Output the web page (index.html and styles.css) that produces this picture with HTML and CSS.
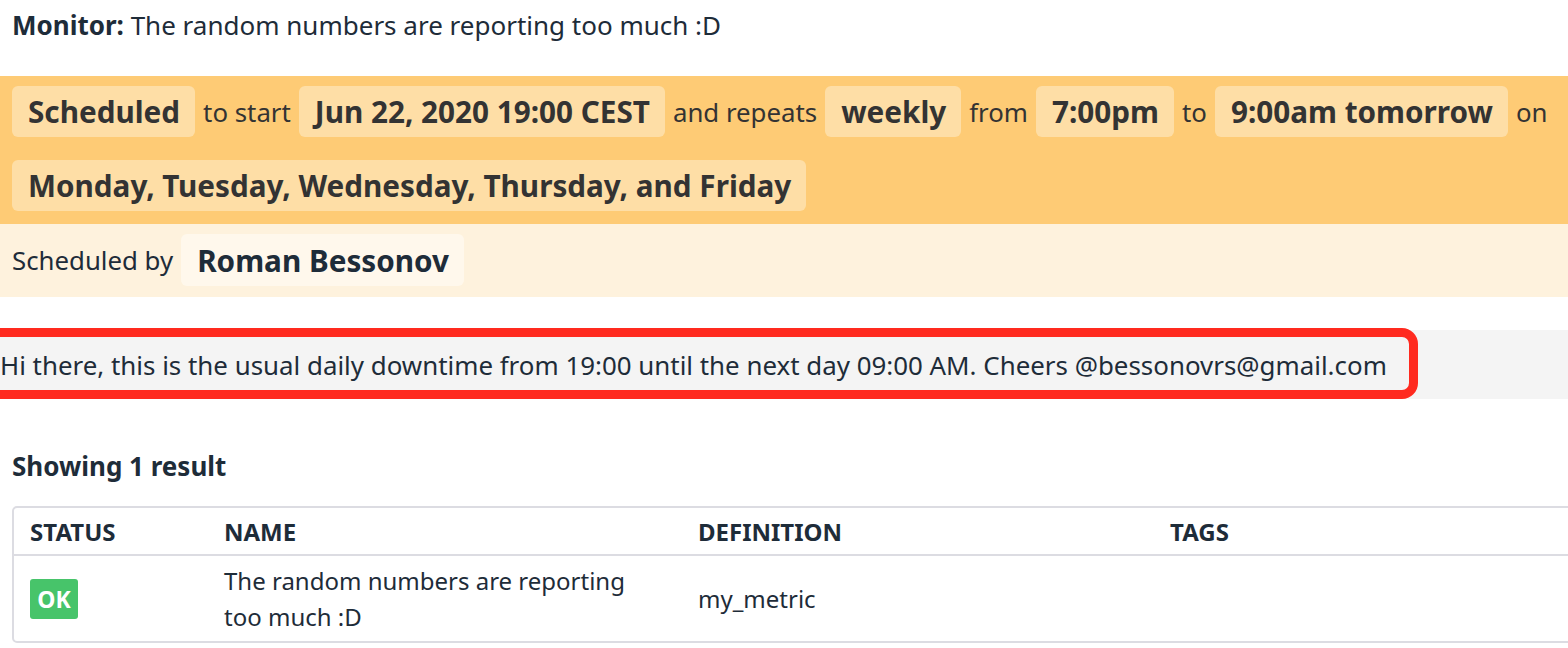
FILE: index.html
```html
<!DOCTYPE html>
<html lang="en">
<head>
<meta charset="utf-8">
<title>Downtime</title>
<link rel="stylesheet" href="styles.css">
</head>
<body>
<div class="page">
  <div class="monitor"><b>Monitor:</b> The random numbers are reporting too much :D</div>

  <div class="schedule">
    <div class="line">
      <span class="chip">Scheduled</span>
      <span class="txt">to start</span>
      <span class="chip">Jun 22, 2020 19:00 CEST</span>
      <span class="txt">and repeats</span>
      <span class="chip">weekly</span>
      <span class="txt">from</span>
      <span class="chip">7:00pm</span>
      <span class="txt">to</span>
      <span class="chip">9:00am tomorrow</span>
      <span class="txt">on</span>
    </div>
    <div class="line">
      <span class="chip">Monday, Tuesday, Wednesday, Thursday, and Friday</span>
    </div>
  </div>

  <div class="byline">
    <span class="txt">Scheduled by</span>
    <span class="chip chip-light">Roman Bessonov</span>
  </div>

  <div class="message">
    <span class="message-text">Hi there, this is the usual daily downtime from 19:00 until the next day 09:00 AM. Cheers @bessonovrs@gmail.com</span>
    <span class="highlight"></span>
  </div>

  <h2 class="results">Showing 1 result</h2>

  <div class="table">
    <div class="row head">
      <div class="cell c1">STATUS</div>
      <div class="cell c2">NAME</div>
      <div class="cell c3">DEFINITION</div>
      <div class="cell c4">TAGS</div>
    </div>
    <div class="row body">
      <div class="cell c1"><span class="ok">OK</span></div>
      <div class="cell c2">The random numbers are reporting<br>too much :D</div>
      <div class="cell c3">my_metric</div>
      <div class="cell c4"></div>
    </div>
  </div>
</div>
</body>
</html>
```

FILE: styles.css
```css
* { box-sizing: border-box; }
html, body {
  margin: 0;
  padding: 0;
  background: #ffffff;
  overflow: hidden;
}
body {
  font-family: "Noto Sans", "Open Sans", sans-serif;
  color: #1e2c39;
  width: 1568px;
  height: 648px;
}
.page {
  width: 1568px;
  overflow: hidden;
}
.monitor {
  font-size: 26px;
  line-height: 34px;
  padding: 8px 12px 34px;
  white-space: nowrap;
}
.monitor b { font-weight: 700; }

.schedule {
  background: #fecb75;
  display: flex;
  flex-direction: column;
  row-gap: 23px;
  padding: 10px 12px 13px;
  color: #333333;
}
.line {
  display: flex;
  align-items: center;
  column-gap: 8px;
  white-space: nowrap;
}
.txt {
  font-size: 25.8px;
  line-height: 34px;
}
.chip {
  display: inline-flex;
  align-items: center;
  height: 51px;
  padding: 0 15px 0 16px;
  border-radius: 6px;
  background: #fedea6;
  font-size: 29.7px;
  font-weight: 700;
  color: #333333;
}
.byline {
  background: #fef2dd;
  display: flex;
  align-items: center;
  column-gap: 8px;
  padding: 10px 12px 11px;
  color: #1e2c39;
}
.chip-light {
  background: #fff8ec;
  height: 52px;
  color: #1e2c39;
}

.message {
  position: relative;
  margin-top: 33px;
  height: 69px;
  background: #f4f4f4;
  display: flex;
  align-items: center;
  font-size: 25.9px;
  line-height: 34px;
  color: #1e2c39;
}
.message-text { white-space: nowrap; }
.highlight {
  position: absolute;
  left: -20px;
  top: -2px;
  width: 1438px;
  height: 71px;
  border: 9px solid #ff2a1f;
  border-radius: 16px;
}

.results {
  margin: 50px 12px 23px;
  font-size: 26px;
  line-height: 34px;
  font-weight: 700;
  color: #1e2c39;
}

.table {
  margin-left: 12px;
  width: 1600px;
  border: 2px solid #dcdce2;
  border-radius: 5px;
}
.row {
  display: grid;
  grid-template-columns: 194px 474px 472px 1fr;
  align-items: center;
}
.head {
  height: 48px;
  border-bottom: 2px solid #dcdce2;
  font-size: 24px;
  font-weight: 700;
  color: #1e2c39;
}
.body {
  height: 85px;
  font-size: 24px;
  line-height: 36px;
  color: #1e2c39;
}
.cell { padding-left: 16px; white-space: nowrap; }
.ok {
  display: inline-flex;
  align-items: center;
  justify-content: center;
  width: 48px;
  height: 40px;
  border-radius: 3px;
  background: #47c46a;
  color: #ffffff;
  font-weight: 700;
  font-size: 23px;
}
```
